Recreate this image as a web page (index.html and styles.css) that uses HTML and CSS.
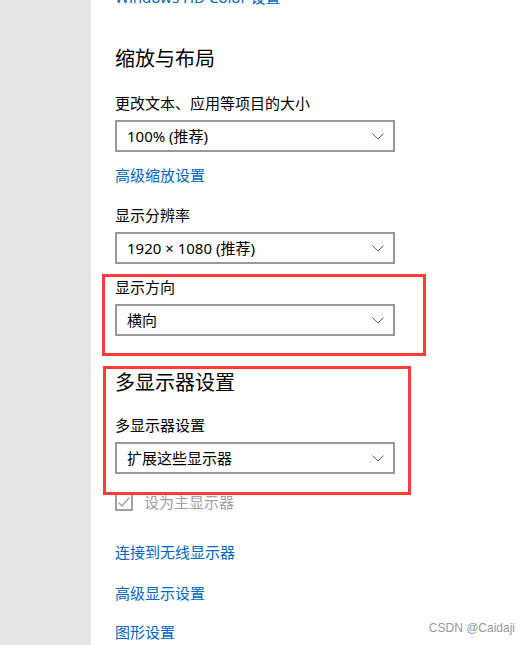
FILE: index.html
```html
<!DOCTYPE html>
<html lang="zh-CN">
<head>
<meta charset="utf-8">
<link rel="stylesheet" href="styles.css">
</head>
<body>
<div class="page">
  <aside class="sidebar"></aside>
  <main class="content">
    <a class="link top-link">Windows HD Color 设置</a>
    <h2 class="heading h-scale">缩放与布局</h2>
    <div class="label l-size">更改文本、应用等项目的大小</div>
    <div class="select">
      <span>100% (推荐)</span>
      <svg class="chev" width="12" height="7" viewBox="0 0 12 7"><path d="M0.5 0.5 L6 6 L11.5 0.5" fill="none" stroke="#666" stroke-width="1"/></svg>
    </div>
    <a class="link l-adv">高级缩放设置</a>
    <div class="label l-res">显示分辨率</div>
    <div class="select">
      <span>1920 × 1080 (推荐)</span>
      <svg class="chev" width="12" height="7" viewBox="0 0 12 7"><path d="M0.5 0.5 L6 6 L11.5 0.5" fill="none" stroke="#666" stroke-width="1"/></svg>
    </div>
    <div class="label l-orient">显示方向</div>
    <div class="select">
      <span>横向</span>
      <svg class="chev" width="12" height="7" viewBox="0 0 12 7"><path d="M0.5 0.5 L6 6 L11.5 0.5" fill="none" stroke="#666" stroke-width="1"/></svg>
    </div>
    <h2 class="heading h-multi">多显示器设置</h2>
    <div class="label l-multi">多显示器设置</div>
    <div class="select">
      <span>扩展这些显示器</span>
      <svg class="chev" width="12" height="7" viewBox="0 0 12 7"><path d="M0.5 0.5 L6 6 L11.5 0.5" fill="none" stroke="#666" stroke-width="1"/></svg>
    </div>
    <div class="check-row">
      <span class="checkbox">
        <svg width="14" height="14" viewBox="0 0 14 14"><path d="M1.5 7.5 L5 11 L12.5 2.5" fill="none" stroke="#a0a0a0" stroke-width="1.3"/></svg>
      </span>
      <span class="check-text">设为主显示器</span>
    </div>
    <a class="link l-wireless">连接到无线显示器</a>
    <a class="link l-advdisp">高级显示设置</a>
    <a class="link l-graphics">图形设置</a>

    <div class="mark mark-1"></div>
    <div class="mark mark-2"></div>
  </main>
  <div class="watermark">CSDN @Caidaji</div>
</div>
</body>
</html>
```

FILE: styles.css
```css
html, body {
  margin: 0;
  padding: 0;
  background: #fff;
}
body {
  font-family: "Noto Sans", "Noto Sans CJK SC", sans-serif;
  color: #000;
}
.page {
  position: relative;
  display: flex;
  width: 532px;
  height: 645px;
  overflow: hidden;
}
.sidebar {
  width: 91px;
  flex: 0 0 91px;
  background: #e6e6e6;
}
.content {
  position: relative;
  flex: 1;
  padding-left: 24px;
  display: flex;
  flex-direction: column;
  align-items: flex-start;
}
.link {
  display: block;
  font-size: 15px;
  line-height: 20px;
  color: #0067c0;
  text-decoration: none;
}
.top-link { margin-top: -13px; }
.heading {
  margin: 0;
  font-size: 20px;
  line-height: 28px;
  font-weight: 400;
}
.h-scale { margin-top: 38px; }
.h-multi { margin-top: 33px; }
.label {
  font-size: 15px;
  line-height: 20px;
}
.l-size { margin-top: 20px; }
.l-res { margin-top: 20px; }
.l-orient { margin-top: 13px; }
.l-multi { margin-top: 18px; }
.l-adv { margin-top: 13px; }
.select {
  box-sizing: border-box;
  width: 280px;
  height: 32px;
  margin-top: 7px;
  border: 2px solid #999;
  padding: 0 9px 2px 10px;
  display: flex;
  align-items: center;
  justify-content: space-between;
  font-size: 15px;
}
.chev { display: block; margin-top: 2px; }
.check-row {
  margin-top: 18px;
  height: 20px;
  display: flex;
  align-items: center;
  gap: 11px;
}
.checkbox {
  box-sizing: border-box;
  width: 18px;
  height: 18px;
  border: 2px solid #a0a0a0;
  display: flex;
  align-items: center;
  justify-content: center;
}
.check-text {
  font-size: 15px;
  line-height: 20px;
  color: #a0a0a0;
}
.l-wireless { margin-top: 30px; }
.l-advdisp { margin-top: 21px; }
.l-graphics { margin-top: 19px; }
.mark {
  position: absolute;
  box-sizing: border-box;
  border: 3px solid #ff3a3a;
}
.mark-1 { left: 11px; top: 274px; width: 324px; height: 82px; }
.mark-2 { left: 12px; top: 366px; width: 308px; height: 129px; }
.watermark {
  position: absolute;
  right: 17px;
  top: 620px;
  font-family: "Liberation Sans", sans-serif;
  font-size: 12px;
  line-height: 16px;
  color: #999;
}
```
